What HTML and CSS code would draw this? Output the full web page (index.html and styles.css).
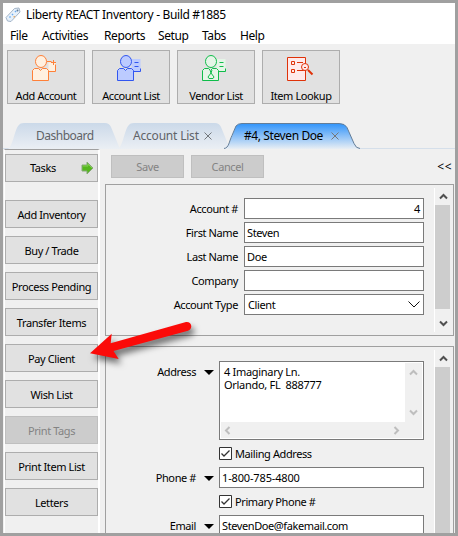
FILE: index.html
```html
<!DOCTYPE html>
<html lang="en">
<head>
<meta charset="utf-8">
<title>Liberty REACT Inventory</title>
<link rel="stylesheet" href="styles.css">
</head>
<body>
<div class="window">
  <header class="titlebar">
    <svg class="logo" width="16" height="16" viewBox="0 0 16 16"><path d="M1 10.5 9.5 1.5 14 1l1 4L6 14.500 2.500 14z" fill="#e6f0fa" stroke="#a3b4c7"/><path d="m4.500 9.500 1 1m1.500-3.500 1 1m2-4 1 1" stroke="#67a9ee" stroke-width="1.500"/><path d="M8.500 9H10v1.500H8.500z" fill="#e6ad70"/><circle cx="12.500" cy="3.500" r="1" fill="#627b96"/></svg>
    <span class="title">Liberty REACT Inventory - Build #1885</span>
  </header>
  <nav class="menu"><span class="m-file">File</span><span class="m-act">Activities</span><span class="m-rep">Reports</span><span class="m-set">Setup</span><span class="m-tabs">Tabs</span><span>Help</span></nav>
  <div class="toolbar">
    <button class="tool"><svg width="28" height="28" viewBox="0 0 28 28" fill="#fff0e0" stroke="#ff8038"><path d="M17.500 8.500h7v9h-7z" stroke="none"/><path d="M16 7.500h4.500m4 3v7h-7M1.500 26.500v-10l2-2h4l2 2 2-2h4l2 2v10z"/><ellipse cx="10" cy="7.500" rx="5.500" ry="6"/><path d="M22.500 6v5m-2.500-2.500h5"/></svg><span>Add Account</span></button>
    <button class="tool"><svg width="28" height="28" viewBox="0 0 28 28" fill="#bccbff" stroke="#3156f0"><path d="M15.500 5h9v12h-9z" stroke="none"/><path d="M18.500 8.500h4m-4 4h4m2 2v3h-7M1.500 26.500v-10l2-2h4l2 2 2-2h4l2 2v10z"/><ellipse cx="10" cy="7.500" rx="5.500" ry="6"/></svg><span>Account List</span></button>
    <button class="tool"><svg width="28" height="28" viewBox="0 0 28 28" fill="#e5f5e7" stroke="#0fbd4a"><path d="M15.500 5h9v12h-9z" stroke="none"/><path d="M18.500 8.500h4m-4 4h4m2 2v3h-7M1.500 26.500v-10l2-2h4l2 2 2-2h4l2 2v10z"/><ellipse cx="10" cy="7.500" rx="5.500" ry="6"/><path d="m9 16 1 3-3 4 1 1.500h4l1-1.500-3-4 1-3"/></svg><span>Vendor List</span></button>
    <button class="tool"><svg width="28" height="28" viewBox="0 0 28 28" fill="#ffe9ea" stroke="#df3209"><path d="M1.500 3.500h18v23h-18z"/><path d="M5.500 7.500h3v3h-3zm0 8h3v3h-3zM11 8.500h6m-6 8h8"/><circle cx="19" cy="13" r="3.500"/><path d="M18 13.500h2"/><path d="m22 16 4.500 4.500" stroke-width="2"/></svg><span>Item Lookup</span></button>
  </div>
  <div class="tabs">
    <div class="tab t1"><svg width="112" height="26" viewBox="0 0 112 26"><defs><linearGradient id="pale" x2="0" y2="1"><stop stop-color="#cbd9e9"/><stop offset="1" stop-color="#ebeff4"/></linearGradient></defs><path d="M0 26C5 23 7 5 11 2Q12 0 16 0H97q4 0 6 4l9 22z" fill="url(#pale)"/></svg><span>Dashboard</span></div>
    <div class="tab t2"><svg width="112" height="26" viewBox="0 0 112 26"><path d="M0 26C5 23 7 5 11 2Q12 0 16 0H97q4 0 6 4l9 22z" fill="url(#pale)"/></svg><span>Account List</span><svg class="close" width="8" height="8" viewBox="0 0 8 8"><path d="m.5.5 7 7m0-7-7 7"/></svg></div>
    <div class="tab t3"><svg width="136" height="27" viewBox="0 0 136 27"><defs><linearGradient id="blue" x2="0" y2="1"><stop stop-color="#3094fb"/><stop offset="1" stop-color="#e9eef4"/></linearGradient></defs><path d="M0 26c5-1 5-7 8-13l4-10Q14 .5 18 .5H115q6 0 8 4l7 16q2 5 6 5.500z" fill="url(#blue)"/><path d="M0 25.500c5-.5 5-7 8-13l4-9.500Q14 .5 18 .5H115q6 0 8 4l7 16q2 5 6 5" fill="none" stroke="#637d98"/></svg><span>#4, Steven Doe</span><svg class="close" width="8" height="8" viewBox="0 0 8 8"><path d="m.5.5 7 7m0-7-7 7"/></svg></div>
  </div>
  <div class="body">
    <aside class="side">
      <button class="tasks"><span>Tasks</span><svg width="13" height="14" viewBox="0 0 13 14"><path d="M1 4h5V1l6 6-6 6v-3H1z" fill="#55b71e" stroke="#87a878"/><path d="M2 5h5V3l4 4" fill="none" stroke="#83cf52"/></svg></button>
      <button>Add Inventory</button><button>Buy / Trade</button><button>Process Pending</button><button>Transfer Items</button><button>Pay Client</button><button>Wish List</button><button class="off">Print Tags</button><button>Print Item List</button><button>Letters</button>
    </aside>
    <main>
      <div class="actions"><button class="off">Save</button><button class="off">Cancel</button><span class="collapse">&lt;&lt;</span></div>
      <section class="panel top">
        <div class="fields">
          <label>Account #</label><div class="input num">4</div>
          <label>First Name</label><div class="input">Steven</div>
          <label>Last Name</label><div class="input">Doe</div>
          <label>Company</label><div class="input"></div>
          <label>Account Type</label><div class="input select"><span>Client</span><svg width="12" height="7" viewBox="0 0 12 7"><path d="m.5.5 5.500 5.500L11.500.5"/></svg></div>
        </div>
        <div class="scroll"><svg class="chev" viewBox="0 0 9 7"><path d="m1 5.500 3.500-3.500L8 5.500"/></svg><i></i><svg class="chev" viewBox="0 0 9 7"><path d="m1 1.500 3.500 3.500L8 1.500"/></svg></div>
      </section>
      <section class="panel bottom">
        <div class="contact">
          <label>Address</label><b class="drop"></b>
          <div class="area"><div class="lines">4 Imaginary Ln.<br>Orlando, FL&nbsp; 888777</div><div class="vbar"><svg class="chev" viewBox="0 0 9 7"><path d="m1 5.500 3.500-3.500L8 5.500"/></svg><svg class="chev" viewBox="0 0 9 7"><path d="m1 1.500 3.500 3.500L8 1.500"/></svg></div><div class="hbar"><svg class="chev left" viewBox="0 0 9 7"><path d="m1 5.500 3.500-3.500L8 5.500"/></svg><svg class="chev right" viewBox="0 0 9 7"><path d="m1 5.500 3.500-3.500L8 5.500"/></svg></div></div>
          <div class="check"><svg width="13" height="13" viewBox="0 0 13 13"><path d="M.5.5h12v12H.5z" fill="#fff" stroke="#333"/><path d="m2.500 6.500 2.500 2.500 5.500-5.500" fill="none" stroke="#333" stroke-width="1.300"/></svg><span>Mailing Address</span></div>
          <label>Phone #</label><b class="drop"></b><div class="input phone">1-800-785-4800</div>
          <div class="check"><svg width="13" height="13" viewBox="0 0 13 13"><path d="M.5.5h12v12H.5z" fill="#fff" stroke="#333"/><path d="m2.500 6.500 2.500 2.500 5.500-5.500" fill="none" stroke="#333" stroke-width="1.300"/></svg><span>Primary Phone #</span></div>
          <label>Email</label><b class="drop"></b><div class="input">StevenDoe@fakemail.com</div>
        </div>
        <div class="scroll"><svg class="chev" viewBox="0 0 9 7"><path d="m1 5.500 3.500-3.500L8 5.500"/></svg><i></i></div>
      </section>
    </main>
  </div>
</div>
<svg class="pointer" width="120" height="55" viewBox="0 0 120 55"><path d="M5 33.300 26.700 13.700 25.700 23.300 101 2q4.500-.5 5.300 4 0 3.500-3.300 4.700L28.500 31l5.200 8z" fill="#fb0b09"/></svg>
</body>
</html>
```
FILE: styles.css
```css
* { box-sizing: border-box; }
body { margin: 0; width: 458px; height: 536px; overflow: hidden; background: #a0a0a0; color: #000; font: 11px/16px "Noto Sans", sans-serif; letter-spacing: -.4px; }
button { font: inherit; letter-spacing: inherit; color: inherit; padding: 0; background: #e1e1e1; border: 1px solid #adadad; border-radius: 0; white-space: nowrap; }
button.off { color: #838383; background: #ccc; border-color: #bfbfbf; }
svg { display: block; flex: none; }
.window { width: 452px; height: 530px; margin: 3px; background: #f0f0f0; overflow: hidden; display: flex; flex-direction: column; }
.titlebar { height: 22px; background: #fff; display: flex; align-items: center; padding: 2px 0 0 2px; font-size: 12px; letter-spacing: -.35px; }
.title { margin-left: 5px; white-space: nowrap; }
.menu { height: 19px; background: #fff; display: flex; padding: 2px 0 0 7px; font-size: 12px; line-height: 17px; }
.menu span { width: 45px; flex: none; }
.menu .m-file { width: 32px; } .menu .m-act { width: 62px; } .menu .m-rep { width: 54px; } .menu .m-set { width: 44px; } .menu .m-tabs { width: 38px; }
.toolbar { height: 76px; padding: 6px 0 0 4px; display: flex; gap: 7px; }
.tool { width: 78px; height: 54px; display: flex; flex-direction: column; align-items: center; padding-top: 3px; }
.tool span { margin-top: 6px; }
.tool svg { margin-right: 2px; }
.tabs { height: 26px; margin-top: 3px; display: flex; border-bottom: 1px solid #d5dfea; color: #5f6368; font-size: 12px; letter-spacing: -.5px; }
.tab { width: 112px; height: 26px; display: grid; grid-template: 26px / 1fr; flex: none; }
.tab > * { grid-area: 1 / 1; }
.tab > span { align-self: center; padding-left: 28px; white-space: nowrap; }
.t1 { margin-left: 5px; }
.t2 { margin-left: -2px; letter-spacing: -.2px; }
.t2 > span { padding-left: 15px; }
.t3 { width: 136px; margin-left: -6px; color: #000; z-index: 1; letter-spacing: -.4px; }
.t3 > span { padding-left: 20px; }
.tab .close { align-self: center; margin-left: 86px; stroke: #72777c; fill: none; }
.t3 .close { margin-left: 107px; }
.body { flex: 1; min-height: 0; display: flex; overflow: hidden; margin-left: 1px; }
.side { width: 96px; flex: none; border-top: 1px solid #a0a0a0; border-right: 2px solid #fff; border-left: 1px solid #fff; padding-top: 4px; display: flex; flex-direction: column; gap: 8px; }
.side button { width: 93px; height: 28px; flex: none; padding-top: 1px; }
.side .tasks { margin-bottom: 10px; display: flex; align-items: center; padding: 0 3px 0 24px; justify-content: space-between; }
main { width: 355px; flex: none; display: flex; flex-direction: column; padding-left: 5px; }
.actions { height: 35px; flex: none; display: flex; gap: 7px; padding: 6px 3px 0 6px; }
.actions button { width: 73px; height: 23px; }
.collapse { margin: 4px 0 0 auto; font-size: 12px; letter-spacing: .5px; }
.panel { border: 1px solid #a0a0a0; width: 349px; flex: none; display: flex; justify-content: space-between; }
.top { height: 152px; padding: 3px 2px; }
.bottom { height: 230px; margin-top: 10px; padding: 3px 2px 0; }
.fields { display: grid; grid-template-columns: 130px 180px; grid-auto-rows: 21px; gap: 3px 6px; padding-top: 10px; }
.fields label { text-align: right; line-height: 21px; }
.input { height: 21px; border: 1px solid #7a7a7a; background: #fff; padding: 0 2px; line-height: 19px; white-space: nowrap; }
.num { text-align: right; padding-right: 3px; }
.phone { letter-spacing: -.15px; }
.select { display: flex; justify-content: space-between; align-items: center; padding: 0 3px; }
.select svg { fill: none; stroke: #111; }
.scroll { width: 17px; border-left: 1px solid #fff; display: flex; flex-direction: column; align-items: center; }
.scroll i { width: 15px; margin-right: 1px; flex: 1; background: #cdcdcd; }
.chev { width: 9px; height: 7px; margin: 5px 0; fill: none; stroke: #505050; stroke-width: 2; flex: none; }
.scroll .chev:last-child { margin: 11px 0 5px; }
.contact { display: grid; grid-template-columns: 88px 23px 205px; grid-template-rows: 79px 27px 21px 27px 21px; padding-top: 11px; }
.contact label { text-align: right; line-height: 22px; }
.drop { width: 0; height: 0; border: 5px solid transparent; border-top-color: #000; border-bottom: 0; margin: 9px 0 0 8px; }
.area { border: 1px solid #7a7a7a; background: #fff; padding: 1px; display: grid; grid-template: 59px 16px / 184px 17px; }
.lines { padding: 2px 3px; line-height: 13px; letter-spacing: -.3px; }
.vbar, .hbar { background: #f0f0f0; display: flex; justify-content: space-between; align-items: center; }
.vbar { flex-direction: column; }
.hbar { grid-column: 1 / 3; padding: 0 21px 0 2px; }
.area .chev { stroke: #bebebe; margin: 6px 0; }
.left { transform: rotate(-90deg); } .right { transform: rotate(90deg); }
.check { grid-column: 3; display: flex; align-items: center; gap: 3px; }
.pointer { position: absolute; left: 85px; top: 320px; filter: drop-shadow(3px 5px 3px #0008); }
```
